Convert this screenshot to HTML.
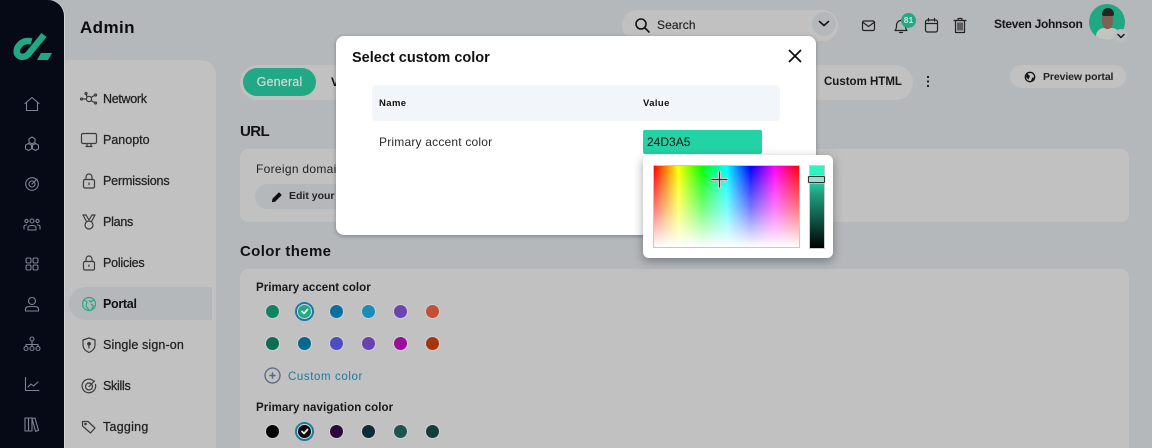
<!DOCTYPE html>
<html><head><meta charset="utf-8"><style>
html,body{margin:0;padding:0}
body{width:1152px;height:448px;overflow:hidden;position:relative;background:#b4b8bb;font-family:"Liberation Sans",sans-serif;color:#111}
div,span,svg{position:absolute}
.t{white-space:nowrap;line-height:16px;height:16px}
.n{left:103px;font-size:12.5px;font-weight:400;color:#222;-webkit-text-stroke:.25px #222}
svg{fill:none;stroke-linecap:round;stroke-linejoin:round}
.si{left:22px;width:20px;height:20px;stroke:#7e8494;stroke-width:1.1}
.ni{left:80px;width:18px;height:18px;stroke:#3c3c3c;stroke-width:1.2}
.d{width:13px;height:13px;border-radius:50%;box-shadow:0 0 0 1px #d0d0d0}
h1,h2{margin:0;position:absolute;white-space:nowrap;font-weight:700}
</style></head><body>
<div style="left:0;top:0;width:64px;height:448px;background:#060a16;border-top-right-radius:16px;box-shadow:1px 0 0 #d2d4d5"></div>
<svg style="left:0;top:0;width:64px;height:70px"><path d="M31.500 41.500C28 40.500 23.500 41 20.500 44 16.500 47.500 15.500 52 18 55 20.500 57.500 25 57.500 28 54.500L44 35" stroke="#20a884" stroke-width="6.500" stroke-linecap="butt"/><path d="M41 53H52L48 60H37Z" fill="#20a884"/></svg>
<svg class="si" style="top:94px" viewBox="0 0 20 20"><path d="M3 9.500 10 3.500 17 9.500M4.500 8.500V16.500H15.500V8.500"/></svg>
<svg class="si" style="top:134px" viewBox="0 0 20 20"><path d="M10 3 13 4.700V8.300L10 10 7 8.300V4.700ZM6.500 9.500 9.500 11.200V14.800L6.500 16.500 3.500 14.800V11.200ZM13.500 9.500 16.500 11.200V14.800L13.500 16.500 10.500 14.800V11.200Z"/></svg>
<svg class="si" style="top:174px" viewBox="0 0 20 20"><circle cx="10" cy="10" r="6.300"/><circle cx="10" cy="10" r="3"/><path d="M10 10 15 5"/></svg>
<svg class="si" style="top:214px" viewBox="0 0 20 20"><circle cx="10" cy="7" r="2"/><circle cx="4.500" cy="7" r="1.600"/><circle cx="15.500" cy="7" r="1.600"/><path d="M6 16V13.500C6 12 8 11.500 10 11.500S14 12 14 13.500V16H6ZM2 15V12.500C2 11.500 3 11 4.500 11M18 15V12.500C18 11.500 17 11 15.500 11"/></svg>
<svg class="si" style="top:254px" viewBox="0 0 20 20"><rect x="4" y="4" width="5" height="5" rx="1.500"/><rect x="11" y="4" width="5" height="5" rx="1.500"/><rect x="4" y="11" width="5" height="5" rx="1.500"/><rect x="11" y="11" width="5" height="5" rx="1.500"/></svg>
<svg class="si" style="top:294px" viewBox="0 0 20 20"><circle cx="10" cy="7" r="3.500"/><path d="M3.500 17V15C3.500 13 5.500 12.500 10 12.500S16.500 13 16.500 15V17Z"/></svg>
<svg class="si" style="top:334px" viewBox="0 0 20 20"><circle cx="10" cy="5" r="2"/><circle cx="4" cy="14.500" r="2"/><circle cx="10" cy="14.500" r="2"/><circle cx="16" cy="14.500" r="2"/><path d="M10 7V12.500M4 12.500V10.500H16V12.500"/></svg>
<svg class="si" style="top:374px" viewBox="0 0 20 20"><path d="M3.500 3.500V16.500H17M6 13 9 10 11.500 12 16 8"/></svg>
<svg class="si" style="top:414px" viewBox="0 0 20 20"><rect x="3" y="4" width="3.500" height="13"/><rect x="6.500" y="4" width="3.500" height="13"/><path d="M10 4.500 13 4 16.500 16.500 13.500 17.300Z"/></svg>

<h1 style="left:80px;top:18px;font-size:17px;line-height:20px;letter-spacing:.4px;color:#0c0c0c">Admin</h1>
<div style="left:65px;top:60px;width:151px;height:388px;background:#c1c1c1;border-top-right-radius:15px"></div>
<div style="left:69px;top:287px;width:143px;height:33px;background:#b4b8bb;border-radius:17px 0 0 17px"></div>

<svg class="ni" style="top:90px" viewBox="0 0 18 18"><circle cx="9" cy="9" r="2.600"/><circle cx="6" cy="3.500" r="1"/><circle cx="1.500" cy="9" r="1"/><circle cx="15.500" cy="5" r="1"/><circle cx="15.500" cy="13" r="1"/><path d="M7 6.800 6.300 4.500M6.400 9H2.500M11 7.300 14.600 5.500M11 10.700 14.600 12.500"/></svg>
<div class="t n" style="top:91px;letter-spacing:-.3px">Network</div>
<svg class="ni" style="top:131px" viewBox="0 0 18 18"><rect x="1.500" y="2.500" width="15" height="10" rx="1.500"/><path d="M6 15.500H12M7 13V15M11 13V15"/></svg>
<div class="t n" style="top:132px;letter-spacing:0">Panopto</div>
<svg class="ni" style="top:172px" viewBox="0 0 18 18"><rect x="3.500" y="7.500" width="11" height="8.500" rx="1.500"/><path d="M6 7.500V5A3 3 0 0 1 12 5V7.500M9 11V12.500"/></svg>
<div class="t n" style="top:173px;letter-spacing:-.15px">Permissions</div>
<svg class="ni" style="top:213px" viewBox="0 0 18 18"><path d="M3 2H6L9 7 12 2H15L11.500 8.500"/><path d="M6.500 8.500 3 2"/><circle cx="9" cy="12" r="4"/></svg>
<div class="t n" style="top:214px;letter-spacing:-.25px">Plans</div>
<svg class="ni" style="top:254px" viewBox="0 0 18 18"><rect x="3.500" y="7.500" width="11" height="8.500" rx="1.500"/><path d="M6 7.500V5A3 3 0 0 1 12 5V7.500M9 11V12.500"/></svg>
<div class="t n" style="top:255px;letter-spacing:-.2px">Policies</div>
<svg class="ni" style="top:295px;stroke:#2aa884" viewBox="0 0 18 18"><circle cx="9" cy="9" r="6.500"/><path d="M4 5 7 7 6 11 9 15M14 4.500 11 7 9 5.500M11 9 13.500 11 11.500 14.500"/></svg>
<div class="t n" style="top:296px;font-weight:700;color:#111;letter-spacing:-.3px;-webkit-text-stroke:0">Portal</div>
<svg class="ni" style="top:336px" viewBox="0 0 18 18"><path d="M9 2 15 4V9C15 12.500 12.500 15 9 16.500 5.500 15 3 12.500 3 9V4Z"/><circle cx="9" cy="7.800" r="1.300" fill="#333"/><path d="M9 9V12"/></svg>
<div class="t n" style="top:337px;letter-spacing:.12px">Single sign-on</div>
<svg class="ni" style="top:377px" viewBox="0 0 18 18"><path d="M14 4.500A6.800 6.800 0 1 0 15.500 7.500"/><circle cx="9" cy="9.500" r="3.500"/><path d="M9 9.500 14.500 4"/></svg>
<div class="t n" style="top:378px;letter-spacing:-.28px">Skills</div>
<svg class="ni" style="top:418px" viewBox="0 0 18 18"><path d="M2.500 3.500H8L15 10 10.500 15 2.500 8Z"/><circle cx="5.500" cy="6" r=".7"/></svg>
<div class="t n" style="top:419px;letter-spacing:.25px">Tagging</div>

<!-- search -->
<div style="left:622px;top:10px;width:216px;height:31px;background:#c1c1c1;border-radius:16px"></div>
<div style="left:812px;top:12px;width:24px;height:24px;background:#b4b8bb;border-radius:50%"></div>
<svg style="left:634px;top:17px;width:17px;height:17px;stroke:#111;stroke-width:1.600" viewBox="0 0 17 17"><circle cx="7" cy="7" r="5"/><path d="M11 11 15 15"/></svg>
<div class="t" style="left:657px;top:17px;font-size:12px;letter-spacing:.1px;color:#222;-webkit-text-stroke:.15px #222">Search</div>
<svg style="left:817px;top:19px;width:14px;height:10px;stroke:#111;stroke-width:1.600" viewBox="0 0 14 10"><path d="M2.500 2.500 7 6.500 11.500 2.500"/></svg>
<svg style="left:861px;top:19px;width:15px;height:14px;stroke:#222;stroke-width:1.200" viewBox="0 0 15 14"><rect x="1.500" y="2" width="12" height="9.500" rx="1.500"/><path d="M2 3.500 7.500 7.500 13 3.500"/></svg>
<svg style="left:893px;top:18px;width:16px;height:16px;stroke:#222;stroke-width:1.200" viewBox="0 0 16 16"><path d="M2 12.500C3.500 11 3.500 9.500 3.500 7.500 3.500 4.500 5.500 2.500 8 2.500S12.500 4.500 12.500 7.500C12.500 9.500 12.500 11 14 12.500ZM6.500 14.500H9.500"/></svg>
<div style="left:901px;top:13px;width:15px;height:15px;border-radius:50%;background:#22a884;color:#cfe5dc;font-size:8.500px;font-weight:700;line-height:15px;text-align:center">81</div>
<svg style="left:924px;top:17px;width:15px;height:17px;stroke:#222;stroke-width:1.200" viewBox="0 0 15 17"><rect x="1.500" y="3" width="12" height="12" rx="2"/><path d="M1.500 6.500H13.500M4.500 1.500V4M10.500 1.500V4"/></svg>
<svg style="left:953px;top:17px;width:14px;height:17px;stroke:#222;stroke-width:1.200" viewBox="0 0 14 17"><path d="M1 3.500H13M5 3V1.500H9V3M2.500 3.500V15.500H11.500V3.500M5 6V13M7 6V13M9 6V13"/></svg>
<div class="t" style="left:994px;top:16px;font-size:12px;font-weight:700;letter-spacing:-.3px;color:#161616">Steven Johnson</div>
<div style="left:1089px;top:4px;width:36px;height:36px;border-radius:50%;background:#20a884;overflow:hidden">
<div style="left:7px;top:24px;width:24px;height:18px;border-radius:8px 8px 0 0;background:#c4c4be"></div>
<div style="left:13px;top:8px;width:11px;height:17px;border-radius:45%;background:#7d6152"></div>
<div style="left:12.500px;top:4px;width:12px;height:8px;border-radius:6px 6px 2px 2px;background:#252421"></div>
</div>
<div style="left:1114px;top:29px;width:14px;height:14px;border-radius:50%;background:#b9bdbf"></div>
<svg style="left:1116px;top:32px;width:10px;height:8px;stroke:#111;stroke-width:1.400" viewBox="0 0 10 8"><path d="M2 2.500 5 5.500 8 2.500"/></svg>

<!-- tabs -->
<div style="left:240px;top:65px;width:673px;height:35px;background:#c1c1c1;border-radius:18px"></div>
<div style="left:243px;top:68px;width:73px;height:28px;background:#22a884;border-radius:14px;color:#cfdcd6;font-size:12.500px;font-weight:400;letter-spacing:.2px;line-height:28px;text-align:center;-webkit-text-stroke:.2px #cfdcd6">General</div>
<div class="t" style="left:331px;top:74px;font-size:12px;font-weight:700">V</div>
<div class="t" style="left:824px;top:74px;font-size:11.500px;font-weight:700;letter-spacing:0;color:#181818">Custom HTML</div>
<svg style="left:924px;top:74px;width:8px;height:15px" viewBox="0 0 8 15"><circle cx="4" cy="3" r="1.100" fill="#111"/><circle cx="4" cy="7.500" r="1.100" fill="#111"/><circle cx="4" cy="12" r="1.100" fill="#111"/></svg>
<div style="left:1010px;top:65px;width:116px;height:23px;border-radius:12px;background:#c1c1c1"></div>
<svg style="left:1024px;top:71px;width:12px;height:12px" viewBox="0 0 12 12"><circle cx="6" cy="6" r="4.700" stroke="#111" stroke-width="1.300"/><path d="M3 2.500 6 5 4.500 8.500 2 6ZM8 7 10 6 9 9.500 7 10Z" fill="#111"/></svg>
<div class="t" style="left:1043px;top:69px;font-size:10.500px;font-weight:700;letter-spacing:-.1px;color:#222">Preview portal</div>

<h2 style="left:240px;top:123px;font-size:15px;line-height:18px;color:#111;letter-spacing:-.6px">URL</h2>
<div style="left:240px;top:149px;width:889px;height:73px;background:#c1c1c1;border-radius:8px"></div>
<div class="t" style="left:256px;top:161px;font-size:12px;letter-spacing:.3px;color:#222">Foreign domain</div>
<div style="left:255px;top:184px;width:110px;height:25px;background:#b4b8bb;border-radius:13px"></div>
<svg style="left:271px;top:191px;width:12px;height:12px;stroke:#111;stroke-width:1.200" viewBox="0 0 12 12"><path d="M2 8 8 2 10 4 4 10 1.500 10.500Z" fill="#111"/></svg>
<div class="t" style="left:289px;top:188px;font-size:10.500px;font-weight:700;letter-spacing:0;color:#222">Edit your URL</div>

<h2 style="left:240px;top:243px;font-size:15px;line-height:18px;color:#111;letter-spacing:.35px">Color theme</h2>
<div style="left:240px;top:269px;width:889px;height:179px;background:#c1c1c1;border-radius:8px 8px 0 0"></div>
<div class="t" style="left:256px;top:280px;font-size:11.500px;font-weight:700;letter-spacing:.05px;color:#181818">Primary accent color</div>

<div class="d" style="left:266px;top:305px;background:#108360"></div>
<div style="left:295px;top:302px;width:15px;height:15px;border:2px solid #1a7aa5;border-radius:50%"></div>
<div style="left:298px;top:305px;width:13px;height:13px;border-radius:50%;background:#22a884;box-shadow:0 0 0 1px #d0d0d0"></div>
<svg style="left:298px;top:305px;width:13px;height:13px;stroke:#e8e8e8;stroke-width:1.800" viewBox="0 0 13 13"><path d="M4 6.500 6 8.500 9.500 4.500"/></svg>
<div class="d" style="left:330px;top:305px;background:#0a70a0"></div>
<div class="d" style="left:362px;top:305px;background:#1a8db8"></div>
<div class="d" style="left:394px;top:305px;background:#6a45b0"></div>
<div class="d" style="left:426px;top:305px;background:#c05038"></div>

<div class="d" style="left:266px;top:337px;background:#0b6e52"></div>
<div class="d" style="left:298px;top:337px;background:#06678f"></div>
<div class="d" style="left:330px;top:337px;background:#4a4fc0"></div>
<div class="d" style="left:362px;top:337px;background:#6a42b0"></div>
<div class="d" style="left:394px;top:337px;background:#990f99"></div>
<div class="d" style="left:426px;top:337px;background:#a8340b"></div>

<svg style="left:264px;top:367px;width:17px;height:17px;stroke:#5a6585;stroke-width:1.300" viewBox="0 0 17 17"><circle cx="8.500" cy="8.500" r="7.500"/><path d="M8.500 6V11M6 8.500H11" stroke-width="1.500"/></svg>
<div class="t" style="left:288px;top:369px;font-size:11.500px;letter-spacing:.6px;color:#1a7aa5">Custom color</div>
<div class="t" style="left:256px;top:400px;font-size:11.500px;font-weight:700;letter-spacing:.1px;color:#181818">Primary navigation color</div>

<div class="d" style="left:266px;top:425px;background:#040404"></div>
<div style="left:295px;top:422px;width:15px;height:15px;border:2px solid #1a7aa5;border-radius:50%"></div>
<div style="left:298px;top:425px;width:13px;height:13px;border-radius:50%;background:#0a0a0a;box-shadow:0 0 0 1px #d0d0d0"></div>
<svg style="left:298px;top:425px;width:13px;height:13px;stroke:#e8e8e8;stroke-width:1.800" viewBox="0 0 13 13"><path d="M4 6.500 6 8.500 9.500 4.500"/></svg>
<div class="d" style="left:330px;top:425px;background:#2a0a3c"></div>
<div class="d" style="left:362px;top:425px;background:#0e2c33"></div>
<div class="d" style="left:394px;top:425px;background:#1a5550"></div>
<div class="d" style="left:426px;top:425px;background:#0f3f38"></div>

<!-- modal -->
<div style="left:336px;top:36px;width:480px;height:199px;background:#fff;border-radius:8px;box-shadow:0 1px 4px rgba(0,0,0,.3)"></div>
<div class="t" style="left:352px;top:49px;font-size:14.500px;line-height:18px;height:18px;font-weight:700;letter-spacing:0;color:#111">Select custom color</div>
<svg style="left:787px;top:48px;width:16px;height:16px;stroke:#111;stroke-width:1.800" viewBox="0 0 16 16"><path d="M2.500 2.500 13.500 13.500M13.500 2.500 2.500 13.500"/></svg>
<div style="left:372px;top:85px;width:408px;height:36px;background:#f2f5f9;border-radius:4px"></div>
<div class="t" style="left:379px;top:96px;font-size:9.500px;font-weight:700;letter-spacing:.4px;color:#111">Name</div>
<div class="t" style="left:643px;top:96px;font-size:9.500px;font-weight:700;letter-spacing:.4px;color:#111">Value</div>
<div class="t" style="left:379px;top:134px;font-size:12px;letter-spacing:.2px;color:#2a2a2a">Primary accent color</div>
<div style="left:643px;top:130px;width:119px;height:24px;background:#24d3a5;border-radius:2px"></div>
<div class="t" style="left:647px;top:134px;font-size:12px;letter-spacing:0;color:#111">24D3A5</div>

<!-- picker -->
<div style="left:643px;top:155px;width:190px;height:103px;background:#fff;border-radius:6px;box-shadow:0 3px 10px rgba(0,0,0,.35)"></div>
<div style="left:653px;top:165px;width:145px;height:81px;border:1px solid #c8c8c8;background:linear-gradient(to bottom,rgba(255,255,255,0) 0%,rgba(255,255,255,.5) 55%,#fff 100%),linear-gradient(to right,#f00,#ff0 16.7%,#0f0 33.3%,#0ff 50%,#00f 66.7%,#f0f 83.3%,#f00)"></div>
<svg style="left:711px;top:171px;width:17px;height:17px" viewBox="0 0 17 17"><path d="M8.500 1V16M1 8.500H16" stroke="#ddd" stroke-width="3"/><path d="M8.500 1V16M1 8.500H16" stroke="#333" stroke-width="1.200"/></svg>
<div style="left:809px;top:165px;width:14px;height:82px;border:.5px solid #ccc;background:linear-gradient(to bottom,#2cf5c0 0%,#2cf5c0 8%,#1f9b7c 35%,#0e4a3b 70%,#000 100%)"></div>
<div style="left:808px;top:176px;width:15px;height:5px;border:1.500px solid #333;background:#9edccb;box-shadow:0 0 0 .5px #ddd;border-radius:1px"></div>
</body></html>
